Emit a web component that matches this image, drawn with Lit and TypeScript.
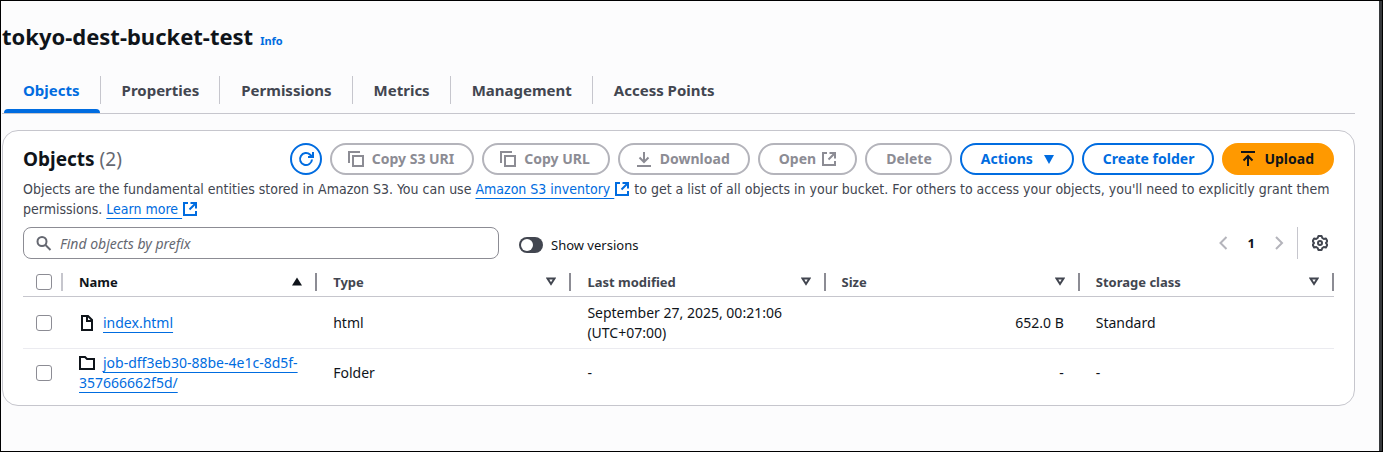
import { LitElement, html, css, svg } from "lit";
import { customElement, state } from "lit/decorators.js";

const icons = {
  refresh: svg`<path d="M14 8.500a6 6 0 1 1-1.800-4.800L14.500 6" /><path d="M15 1v5h-5" />`,
  copy: svg`<path d="M1 12V1h11" /><path d="M5 5h10v10H5z" />`,
  download: svg`<path d="M1 15h14M8 1v10M3.500 6.500 8 11l4.500-4.500" />`,
  upload: svg`<path d="M1 1h14M8 15V5M3.500 9.500 8 5l4.500 4.500" />`,
  external: svg`<path d="M6 2H2v12h12v-4" /><path d="M8.500 2H14v5.500M14 2 7.500 8.500" />`,
  search: svg`<circle cx="6" cy="6.500" r="4.500" /><path d="m9.500 10 5 5" />`,
  prev: svg`<path d="M10.500 2 4.500 8l6 6" />`,
  next: svg`<path d="m5 2 6 6-6 6" />`,
  settings: svg`<path stroke-linejoin="round" d="M6.400 1h3.200l.7 2 1.500.9 2.100-.4 1.500 2.700L14 7.900v.2l1.400 1.700-1.500 2.700-2.100-.4-1.500.9-.7 2H6.400l-.7-2-1.500-.9-2.100.4L.6 9.800 2 8.100v-.2L.6 6.200l1.500-2.700 2.100.4L5.700 3z" /><circle cx="8" cy="8" r="2" />`,
  file: svg`<path d="M3 1h6l4 4v10H3z" /><path d="M8 1v5h5" />`,
  folder: svg`<path d="M1 2h5l2 2h7v10H1z" />`,
};

const icon = (name: keyof typeof icons) =>
  html`<svg class="icon" viewBox="0 0 16 16" aria-hidden="true">${icons[name]}</svg>`;

const caret = (kind: "open" | "up" | "down") => html`
  <svg class="caret ${kind}" viewBox="0 0 10 9" aria-hidden="true">
    <path d=${kind === "up" ? "M5 .5 10 8.500H0z" : kind === "down" ? "M0 0h10L5 9z" : "M1.500 1.500h7L5 7z"} />
  </svg>`;

interface Row {
  name: string;
  type: string;
  modified: string;
  size: string;
  storage: string;
}

@customElement("app-root")
export class AppRoot extends LitElement {
  @state() private showVersions = false;

  private tabs = ["Objects", "Properties", "Permissions", "Metrics", "Management", "Access Points"];
  private columns = ["Name", "Type", "Last modified", "Size", "Storage class"];
  private rows: Row[] = [
    { name: "index.html", type: "html", modified: "September 27, 2025, 00:21:06 (UTC+07:00)", size: "652.0 B", storage: "Standard" },
    { name: "job-dff3eb30-88be-4e1c-8d5f-357666662f5d/", type: "Folder", modified: "-", size: "-", storage: "-" },
  ];

  static styles = css`
    :host {
      display: block;
      box-sizing: border-box;
      min-height: 100vh;
      padding: 19px 27px 24px 1px;
      border: 1px solid #000;
      box-shadow: inset -3px 0 #36393c;
      background: #fcfcfd;
      color: #0f141a;
      font: 14px/20px "Noto Sans", sans-serif;
    }
    * { box-sizing: border-box; }
    button, input { font: inherit; }
    a {
      color: #006ce0;
      text-decoration: underline 1px;
      text-underline-offset: 4px;
      text-decoration-skip-ink: none;
    }
    .icon {
      width: 16px;
      height: 16px;
      flex: none;
      fill: none;
      stroke: currentColor;
      stroke-width: 2;
    }
    .title { display: flex; align-items: baseline; gap: 7px; }
    h1 { margin: 0; font-size: 22px; line-height: 32px; font-weight: 700; }
    .info { font-size: 11px; font-weight: 700; text-decoration: none; }
    .tabs {
      display: flex;
      margin-top: 20px;
      border-bottom: 1px solid #c6c6cd;
    }
    .tab {
      display: flex;
      flex-direction: column;
      padding: 4px 0 0;
      border: 0;
      background: none;
      color: #424650;
      font-size: 15px;
      line-height: 28px;
      font-weight: 700;
      white-space: nowrap;
    }
    .tab span { padding: 0 20px 0 21px; border-right: 1px solid #c6c6cd; }
    .tab:last-child span { border-right: 0; }
    .tab::after { content: ""; height: 4px; margin: 5px 1px 0 2px; align-self: stretch; border-radius: 4px 4px 0 0; }
    .tab.active { color: #006ce0; }
    .tab.active::after { background: #006ce0; }
    .card {
      margin-top: 16px;
      padding: 12px 20px 4px;
      border: 1px solid #c6c6cd;
      border-radius: 16px;
      background: #fff;
    }
    .header { display: flex; align-items: center; justify-content: space-between; }
    h2 { margin: 0; font-size: 19px; line-height: 24px; font-weight: 700; }
    .count { color: #656871; font-weight: 400; }
    .actions { display: flex; gap: 8px; }
    .btn {
      display: flex;
      align-items: center;
      gap: 8px;
      height: 32px;
      padding: 0 18px 0 19px;
      border: 2px solid #006ce0;
      border-radius: 16px;
      background: #fff;
      color: #006ce0;
      font-weight: 700;
      white-space: nowrap;
    }
    .btn:disabled { border-color: #b4b4bb; color: #8c8c94; }
    .btn.lead { padding-left: 16px; }
    .btn.trail { gap: 5px; }
    .btn.menu { gap: 11px; }
    .btn.round { width: 32px; padding: 0; justify-content: center; }
    .btn.primary { border-color: #ff9900; background: #ff9900; color: #0f141a; }
    .caret { width: 10px; height: 9px; flex: none; fill: currentColor; }
    .caret.open { fill: none; stroke: currentColor; stroke-width: 2; }
    .description { margin: 4px 0 0; color: #424650; font-family: "DejaVu Sans Condensed", "Noto Sans", sans-serif; }
    .description .icon { vertical-align: -3px; color: #006ce0; }
    .tools { display: flex; align-items: center; margin-top: 8px; }
    .search {
      display: flex;
      align-items: center;
      gap: 8px;
      flex: 0 1 476px;
      height: 32px;
      padding: 0 12px;
      border: 1px solid #8c8c94;
      border-radius: 8px;
      color: #656871;
    }
    .search input { flex: 1; min-width: 0; padding: 1px 0 0; border: 0; outline: 0; background: none; color: #0f141a; }
    .search input::placeholder { color: #656871; opacity: 1; font-style: italic; }
    .toggle { display: flex; align-items: center; gap: 8px; margin: 4px 0 0 20px; font-size: 13px; }
    .toggle input {
      appearance: none;
      width: 24px;
      height: 16px;
      margin: 0;
      padding: 2px;
      border-radius: 8px;
      background: #424650;
    }
    .toggle input::before { content: ""; display: block; width: 12px; height: 12px; border-radius: 50%; background: #fff; }
    .toggle input:checked { padding-left: 10px; background: #006ce0; }
    .pages { display: flex; align-items: center; gap: 16px; margin-left: auto; }
    .plain { display: flex; padding: 0; border: 0; background: none; color: #424650; }
    .plain:disabled { color: #b4b4bb; }
    .page { color: #0f141a; font-size: 13px; font-weight: 700; line-height: 20px; }
    .prefs { display: flex; align-items: center; height: 32px; margin-left: -6px; padding: 0 6px 0 14px; border-left: 1px solid #c6c6cd; }
    table { width: 100%; margin-top: 8px; border-collapse: separate; border-spacing: 0; table-layout: fixed; }
    th, td { padding: 0 16px; text-align: left; }
    th { height: 30px; padding-right: 0; border-bottom: 1px solid #c6c6cd; color: #424650; font-size: 13px; }
    td { height: 52px; padding-top: 6px; padding-bottom: 5px; border-bottom: 1px solid #ebebf0; }
    tr:last-child td { padding-top: 4px; padding-bottom: 8px; border-bottom: 0; }
    th.select, td.select { width: 40px; padding-left: 13px; padding-right: 0; }
    .select .cell { padding-right: 0; border-color: #c6c6cd; }
    .cell { display: flex; align-items: center; justify-content: space-between; height: 18px; padding-right: 13px; border-right: 2px solid #8c8c94; }
    .sorted { color: #0f141a; }
    .right { text-align: right; }
    .check {
      appearance: none;
      display: block;
      width: 16px;
      height: 16px;
      margin: 0;
      border: 1px solid #8c8c94;
      border-radius: 3px;
      background: #fff;
    }
    .check:checked { border-color: #006ce0; background: #006ce0; }
    .name .icon { margin-right: 8px; vertical-align: -3px; }
  `;

  private renderRow(row: Row) {
    return html`
      <tr>
        <td class="select"><input class="check" type="checkbox" aria-label="Select ${row.name}" /></td>
        <td class="name">${icon(row.type === "Folder" ? "folder" : "file")}<a href="#">${row.name}</a></td>
        <td>${row.type}</td>
        <td>${row.modified}</td>
        <td class="right">${row.size}</td>
        <td>${row.storage}</td>
      </tr>`;
  }

  render() {
    return html`
      <header class="title"><h1>tokyo-dest-bucket-test</h1><a class="info" href="#">Info</a></header>
      <nav class="tabs" role="tablist">
        ${this.tabs.map((tab, i) => html`<button class="tab ${i === 0 ? "active" : ""}" role="tab" aria-selected=${i === 0}><span>${tab}</span></button>`)}
      </nav>
      <section class="card">
        <div class="header">
          <h2>Objects <span class="count">(2)</span></h2>
          <div class="actions">
            <button class="btn round" aria-label="Refresh">${icon("refresh")}</button>
            <button class="btn lead" disabled>${icon("copy")}Copy S3 URI</button>
            <button class="btn lead" disabled>${icon("copy")}Copy URL</button>
            <button class="btn lead" disabled>${icon("download")}Download</button>
            <button class="btn trail" disabled>Open${icon("external")}</button>
            <button class="btn" disabled>Delete</button>
            <button class="btn menu">Actions${caret("down")}</button>
            <button class="btn">Create folder</button>
            <button class="btn lead primary">${icon("upload")}Upload</button>
          </div>
        </div>
        <p class="description">
          Objects are the fundamental entities stored in Amazon S3. You can use
          <a href="#">Amazon S3 inventory </a>${icon("external")}
          to get a list of all objects in your bucket. For others to access your objects, you'll need to explicitly grant them permissions.
          <a href="#">Learn more </a>${icon("external")}
        </p>
        <div class="tools">
          <label class="search">${icon("search")}<input type="text" placeholder="Find objects by prefix" aria-label="Find objects by prefix" /></label>
          <label class="toggle">
            <input type="checkbox" role="switch" .checked=${this.showVersions}
              @change=${(e: Event) => (this.showVersions = (e.target as HTMLInputElement).checked)} />Show versions
          </label>
          <div class="pages">
            <button class="plain" disabled aria-label="Previous page">${icon("prev")}</button>
            <button class="plain page">1</button>
            <button class="plain" disabled aria-label="Next page">${icon("next")}</button>
            <div class="prefs"><button class="plain" aria-label="Preferences">${icon("settings")}</button></div>
          </div>
        </div>
        <table>
          <thead>
            <tr>
              <th class="select"><div class="cell"><input class="check" type="checkbox" aria-label="Select all" /></div></th>
              ${this.columns.map((col, i) => html`<th class=${i === 0 ? "sorted" : ""}><div class="cell">${col}${caret(i === 0 ? "up" : "open")}</div></th>`)}
            </tr>
          </thead>
          <tbody>${this.rows.map((row) => this.renderRow(row))}</tbody>
        </table>
      </section>`;
  }
}
